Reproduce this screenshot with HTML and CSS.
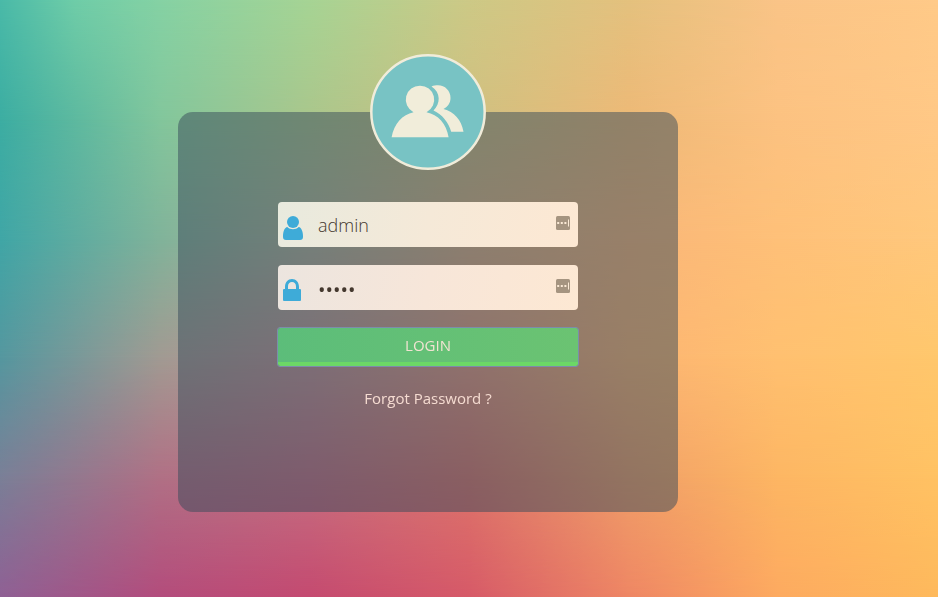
FILE: index.html
```html
<!DOCTYPE html>
<html lang="en">
<head>
<meta charset="utf-8">
<meta name="viewport" content="width=device-width, initial-scale=1">
<title>Login</title>
<link rel="stylesheet" href="styles.css">
</head>
<body>
<div class="backdrop" aria-hidden="true">
  <div class="band band-1"></div>
  <div class="band band-2"></div>
  <div class="band band-3"></div>
  <div class="band band-4"></div>
  <div class="band band-5"></div>
  <div class="band band-6"></div>
</div>
<main class="page">
  <section class="card">
    <svg class="avatar" viewBox="0 0 116 116" aria-hidden="true">
      <circle class="avatar-disc" cx="58" cy="58" r="56.7"/>
      <path class="avatar-person" d="M61.500 32.500C63.500 31.500 66 31.300 68 31.300C75 31.300 80.500 36.800 80.500 44C80.500 49 78 52.800 73.500 55C84 57.500 91.500 66 93.500 77.700H81.200C78.500 68.500 72.500 60.500 63.500 56.500C70.500 49.500 71 38.500 61.500 32.500Z"/>
      <path class="avatar-person" d="M50 31.700A14 14 0 0 1 56.500 58.200C68 60.500 76.500 69.500 78.600 83.300H21.600C24 69.500 32.500 60.500 43.500 58.200A14 14 0 0 1 50 31.700Z"/>
    </svg>
    <form class="form">
      <div class="field field-user">
        <label class="field-label" for="user" aria-label="Username">
          <svg class="field-icon" viewBox="0 0 21 25" aria-hidden="true">
            <circle cx="10" cy="7" r="6"/>
            <path d="M4.300 12C7.300 15 12.700 15 15.700 12C18.700 12.500 20.200 17.500 20 22Q20 25 17 25H3Q0 25 0 22C-.2 17.500 1.300 12.500 4.300 12Z"/>
          </svg>
        </label>
        <input class="field-input" id="user" type="text" value="admin">
        <svg class="fill-icon" viewBox="0 0 14 14" aria-hidden="true">
          <rect class="fill-box" width="14" height="14" rx="1.500"/>
          <path class="fill-mark" d="M1.200 6h2v2h-2zM4.800 6h2v2h-2zM8.400 6h2v2h-2zM12 3.500h1v7h-1z"/>
        </svg>
      </div>
      <div class="field field-pass">
        <label class="field-label" for="pass" aria-label="Password">
          <svg class="field-icon" viewBox="0 0 21 25" aria-hidden="true">
            <path d="M0 12Q0 11 1 11H2V9C2 4 5 1 9 1S16 4 16 9V11H17Q18 11 18 12V22Q18 23 17 23H1Q0 23 0 22ZM5 11H13V8.500C13 5.500 11.500 4 9 4S5 5.500 5 8.500Z"/>
          </svg>
        </label>
        <input class="field-input" id="pass" type="password" value="admin">
        <svg class="fill-icon" viewBox="0 0 14 14" aria-hidden="true">
          <rect class="fill-box" width="14" height="14" rx="1.500"/>
          <path class="fill-mark" d="M1.200 6h2v2h-2zM4.800 6h2v2h-2zM8.400 6h2v2h-2zM12 3.500h1v7h-1z"/>
        </svg>
      </div>
      <button class="login" type="button">LOGIN</button>
      <a class="forgot" href="#">Forgot Password ?</a>
    </form>
  </section>
</main>
</body>
</html>
```
FILE: styles.css
```css
* {
  box-sizing: border-box;
}

body {
  margin: 0;
  min-height: 100vh;
  font-family: "Open Sans", "Noto Sans", sans-serif;
}

/* Colour mesh: each band fades in over the one above it */
.backdrop {
  position: fixed;
  inset: 0;
  z-index: -1;
}

.band {
  position: absolute;
  inset: 0;
}

.band-1 {
  background: linear-gradient(90deg, #4abaa8, #6fcda8 8%, #85d2a4 17%, #a6d494 33%, #cdc986 50%, #e4c17e 67%, #fac487 83%, #ffca88);
}

.band-2 {
  background: linear-gradient(90deg, #3cada2, #82c69c 17%, #aac68c 33%, #d0c080 50%, #edb977 67%, #fcc281 83%, #ffc886);
  mask-image: linear-gradient(transparent, #000 20%);
}

.band-3 {
  background: linear-gradient(90deg, #40a6a6, #80b39a 17%, #b4b69a 33%, #e3b484 50%, #fab678 67%, #fec078 83%, #ffc87c);
  mask-image: linear-gradient(transparent 20%, #000 40%);
}

.band-4 {
  background: linear-gradient(90deg, #55979f, #a19a92 17%, #c49494 33%, #ea9a80 50%, #fcb472 67%, #ffc070 83%, #ffc76c);
  mask-image: linear-gradient(transparent 40%, #000 60%);
}

.band-5 {
  background: linear-gradient(90deg, #7a7f97, #b07085 17%, #c66e80 33%, #de746a 50%, #f09e68 67%, #fdb663 83%, #ffc263);
  mask-image: linear-gradient(transparent 60%, #000 80%);
}

.band-6 {
  background: linear-gradient(90deg, #8f6094, #b34c7c 17%, #c44a70 33%, #d65a68 50%, #ee8664 67%, #fdaa60 83%, #feb95c);
  mask-image: linear-gradient(transparent 80%, #000);
}

.page {
  display: flex;
  justify-content: center;
  padding: 112px 82px 80px 0;
}

.card {
  display: flex;
  flex-direction: column;
  align-items: center;
  width: 100%;
  max-width: 500px;
  min-height: 400px;
  border-radius: 15px;
  background: rgba(54, 74, 90, 0.5);
}

.avatar {
  width: 116px;
  height: 116px;
  margin-top: -58px;
}

.avatar-disc {
  fill: #78c3c4;
  stroke: #f0ecda;
  stroke-width: 2.5;
}

.avatar-person {
  fill: #f1edda;
}

.form {
  display: flex;
  flex-direction: column;
  gap: 18px;
  width: 300px;
  margin-top: 32px;
}

.field {
  display: flex;
  align-items: center;
  height: 45px;
  padding: 0 8px 0 5px;
  border-radius: 4px;
}

.field-user {
  background: linear-gradient(100deg, #e8eade, #f5e9d8 50%, #fde8d3);
}

.field-pass {
  background: linear-gradient(100deg, #ece5df, #f7e6d9 50%, #fde8d3);
}

.field-label {
  display: flex;
  padding-top: 6px;
}

.field-icon {
  width: 21px;
  height: 25px;
  fill: #3eabd8;
}

.field-input {
  flex: 1;
  min-width: 0;
  height: 45px;
  padding: 0 0 0 14px;
  border: 0;
  outline: 0;
  background: none;
  color: #44382e;
  font-family: inherit;
  font-size: 18px;
  font-weight: 300;
}

.field-input[type="password"] {
  padding-top: 3px;
  font-size: 20px;
  font-weight: 400;
}

.fill-icon {
  width: 14px;
  height: 14px;
  margin-bottom: 3px;
}

.fill-box {
  fill: #a59480;
}

.fill-mark {
  fill: #fbe9d5;
}

.login {
  height: 38px;
  padding: 0;
  border: 0;
  border-bottom: 4px solid #6cd866;
  border-radius: 2px;
  outline: 1px solid #7c8cab;
  background: linear-gradient(90deg, #5cbd7a, #6bc372);
  color: #f1e3d2;
  font-family: inherit;
  font-size: 15px;
}

.forgot {
  align-self: center;
  color: #f5dbd1;
  font-size: 15px;
  line-height: 28px;
  text-decoration: none;
}
```
